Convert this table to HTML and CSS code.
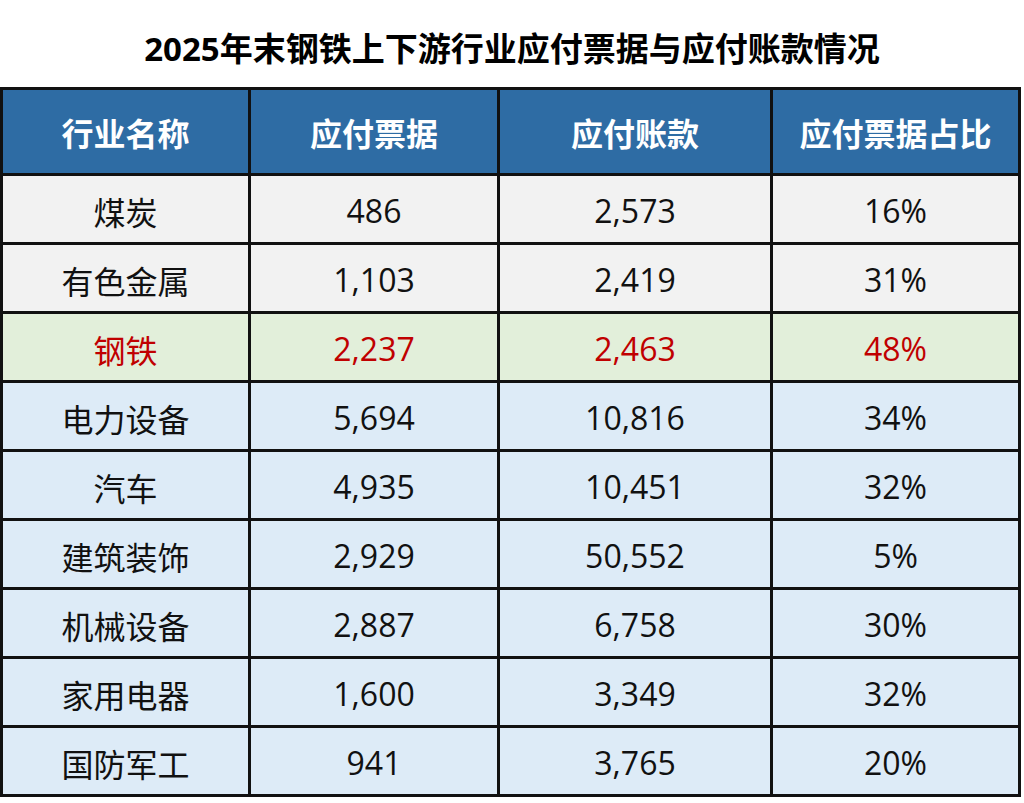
FILE: index.html
```html
<!DOCTYPE html>
<html lang="zh-CN">
<head>
<meta charset="utf-8">
<title>2025年末钢铁上下游行业应付票据与应付账款情况</title>
<link rel="stylesheet" href="styles.css">
</head>
<body>
<div class="page">
  <h1 class="title">2025年末钢铁上下游行业应付票据与应付账款情况</h1>
  <div class="table">
    <div class="cell head">行业名称</div>
    <div class="cell head">应付票据</div>
    <div class="cell head">应付账款</div>
    <div class="cell head">应付票据占比</div>

    <div class="cell gray">煤炭</div>
    <div class="cell gray">486</div>
    <div class="cell gray">2,573</div>
    <div class="cell gray">16%</div>

    <div class="cell gray">有色金属</div>
    <div class="cell gray">1,103</div>
    <div class="cell gray">2,419</div>
    <div class="cell gray">31%</div>

    <div class="cell green red">钢铁</div>
    <div class="cell green red">2,237</div>
    <div class="cell green red">2,463</div>
    <div class="cell green red">48%</div>

    <div class="cell blue">电力设备</div>
    <div class="cell blue">5,694</div>
    <div class="cell blue">10,816</div>
    <div class="cell blue">34%</div>

    <div class="cell blue">汽车</div>
    <div class="cell blue">4,935</div>
    <div class="cell blue">10,451</div>
    <div class="cell blue">32%</div>

    <div class="cell blue">建筑装饰</div>
    <div class="cell blue">2,929</div>
    <div class="cell blue">50,552</div>
    <div class="cell blue">5%</div>

    <div class="cell blue">机械设备</div>
    <div class="cell blue">2,887</div>
    <div class="cell blue">6,758</div>
    <div class="cell blue">30%</div>

    <div class="cell blue">家用电器</div>
    <div class="cell blue">1,600</div>
    <div class="cell blue">3,349</div>
    <div class="cell blue">32%</div>

    <div class="cell blue">国防军工</div>
    <div class="cell blue">941</div>
    <div class="cell blue">3,765</div>
    <div class="cell blue">20%</div>
  </div>
</div>
</body>
</html>
```
FILE: styles.css
```css
* { box-sizing: border-box; }
html, body {
  margin: 0;
  padding: 0;
  background: #ffffff;
}
body {
  font-family: "Open Sans", "Noto Sans CJK SC", sans-serif;
  color: #111111;
}
.page {
  width: 1024px;
  height: 803px;
}
.title {
  margin: 0;
  height: 87px;
  display: flex;
  align-items: center;
  justify-content: center;
  font-size: 33px;
  font-weight: 700;
  color: #000000;
  padding-top: 6px;
}
.table {
  display: grid;
  grid-template-columns: 248px 249px 273px 248px;
  grid-template-rows: 86px repeat(9, 69px);
  width: 1021px;
  border-left: 3px solid #111111;
  border-top: 3px solid #111111;
}
.cell {
  display: flex;
  align-items: center;
  justify-content: center;
  border-right: 3px solid #111111;
  border-bottom: 3px solid #111111;
  font-size: 32px;
  padding-top: 3px;
}
.head {
  background: #2e6ca4;
  color: #ffffff;
  font-weight: 700;
  padding-top: 0;
}
.gray { background: #f2f2f2; }
.green { background: #e2efda; }
.blue { background: #ddebf7; }
.red { color: #c00000; }
```
